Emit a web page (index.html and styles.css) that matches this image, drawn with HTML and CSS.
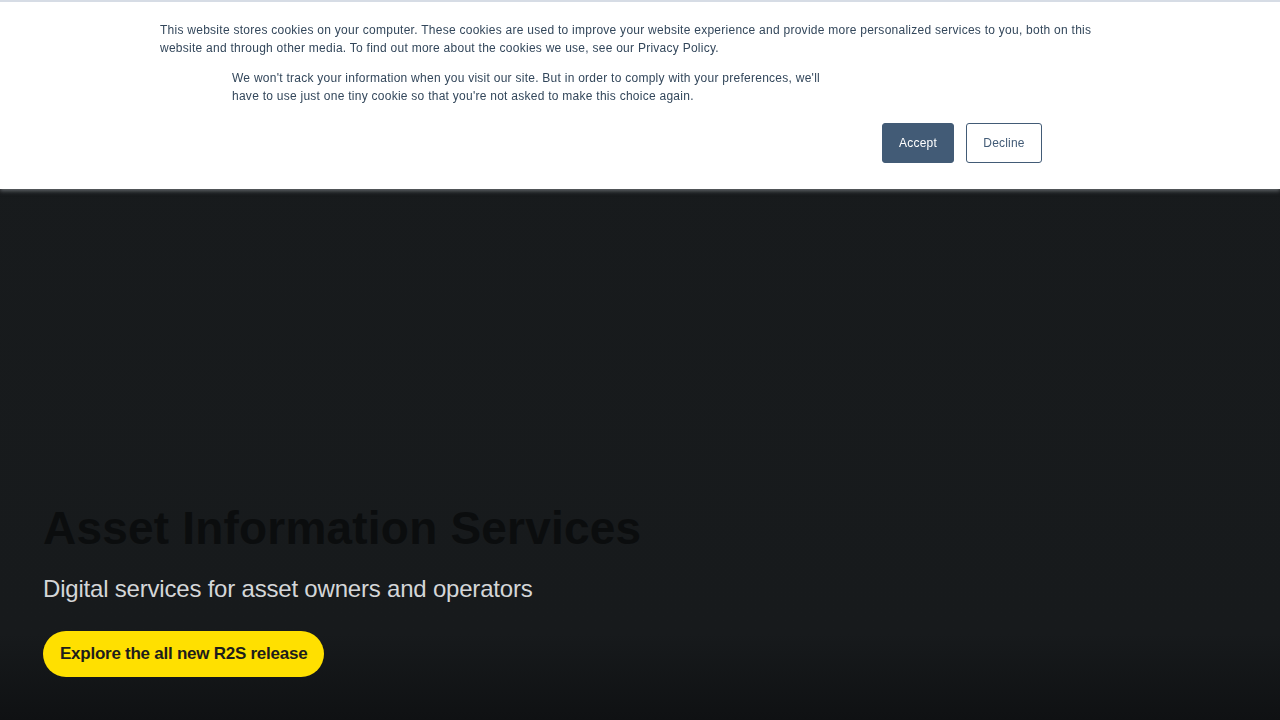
FILE: index.html
```html
<!DOCTYPE html>
<html lang="en">
<head>
    <meta charset="UTF-8">
    <meta name="viewport" content="width=device-width, initial-scale=1.0">
    <title>Asset Information Services</title>
    <link rel="stylesheet" href="styles.css">
</head>
<body>
    <!-- Cookie banner -->
    <div class="cookie-banner">
        <div class="cookie-inner">
            <p class="cookie-text">This website stores cookies on your computer. These cookies are used to improve your website experience and provide more personalized services to you, both on this website and through other media. To find out more about the cookies we use, see our Privacy Policy.</p>
            <p class="cookie-text cookie-second">We won't track your information when you visit our site. But in order to comply with your preferences, we'll have to use just one tiny cookie so that you're not asked to make this choice again.</p>
            <div class="cookie-actions">
                <button class="btn-accept">Accept</button>
                <button class="btn-decline">Decline</button>
            </div>
        </div>
    </div>

    <!-- Hero -->
    <section class="hero">
        <div class="hero-content">
            <h1>Asset Information Services</h1>
            <p class="hero-sub">Digital services for asset owners and operators</p>
            <a href="#" class="hero-btn">Explore the all new R2S release</a>
        </div>
    </section>
</body>
</html>
```

FILE: styles.css
```css
body {
    margin: 0;
    font-family: "Liberation Sans", Arial, sans-serif;
    background: #171a1c;
}
.cookie-banner {
    position: fixed;
    top: 0;
    left: 0;
    right: 0;
    z-index: 10;
    background: #fff;
    border-top: 2px solid #d6dce5;
    box-shadow: 0 2px 4px rgba(150, 155, 160, 0.6);
}
.cookie-inner {
    width: 960px;
    margin: 0 auto;
    padding: 19px 0 26px;
}
.cookie-text {
    margin: 0;
    font-size: 12px;
    line-height: 18px;
    letter-spacing: 0.26px;
    color: #33475b;
}
.cookie-second {
    margin: 12px 0 0 72px;
    width: 600px;
}
.cookie-actions {
    display: flex;
    justify-content: flex-end;
    gap: 12px;
    margin-top: 18px;
    padding-right: 78px;
}
.cookie-actions button {
    height: 40px;
    font-family: inherit;
    font-size: 12px;
    letter-spacing: 0.2px;
    border-radius: 3px;
    border: 1px solid #425b76;
    cursor: pointer;
}
.btn-accept {
    width: 72px;
    background: #425b76;
    color: #fff;
}
.btn-decline {
    width: 76px;
    background: #fff;
    color: #425b76;
}
.hero {
    height: 720px;
    display: flex;
    align-items: flex-end;
    background: linear-gradient(to bottom, #181b1d 0%, #171a1c 88%, #0f1113 100%);
}
.hero-content {
    padding: 0 0 43px 43px;
}
.hero h1 {
    margin: 0;
    font-size: 46px;
    line-height: 52px;
    letter-spacing: 0.2px;
    color: #0b0d0e;
}
.hero-sub {
    margin: 20px 0 0;
    font-size: 24px;
    line-height: 30px;
    letter-spacing: -0.2px;
    color: #d4d6d8;
}
.hero-btn {
    display: inline-block;
    margin-top: 27px;
    padding: 0 17px;
    height: 46px;
    line-height: 46px;
    border-radius: 23px;
    background: #ffe000;
    color: #1d1d1b;
    font-size: 17px;
    font-weight: bold;
    letter-spacing: -0.25px;
    text-decoration: none;
}
```
